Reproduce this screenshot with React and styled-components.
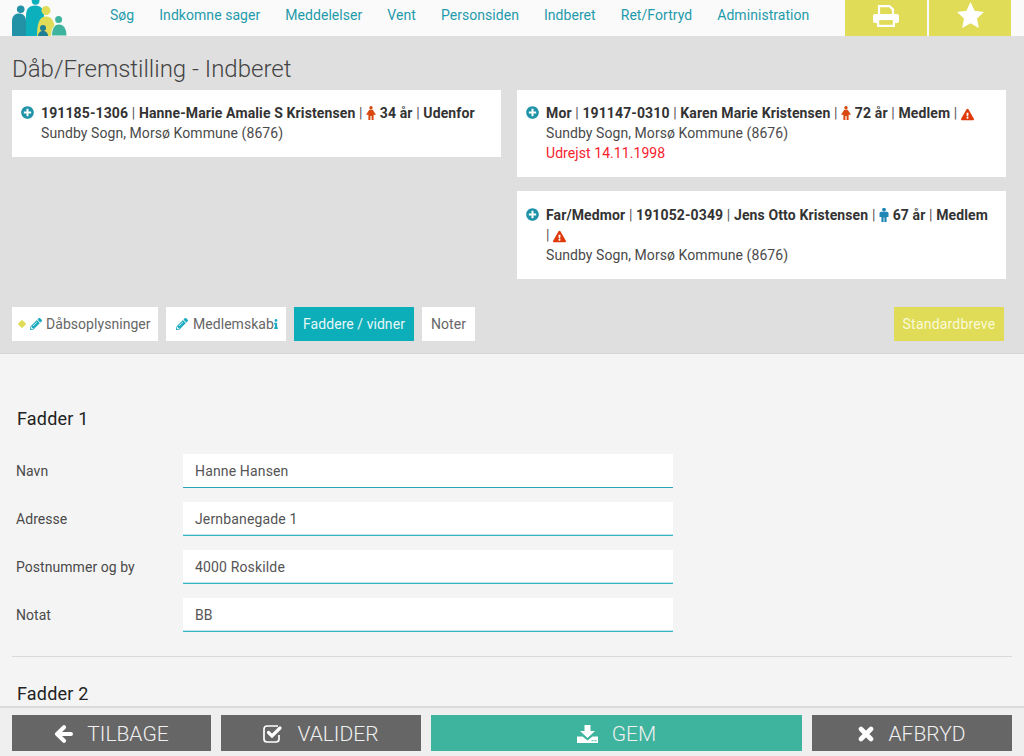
import React from "react";
import styled, { createGlobalStyle } from "styled-components";
import {
  FaPlusCircle,
  FaExclamationTriangle,
  FaPencilAlt,
  FaInfo,
} from "react-icons/fa";

const GlobalStyle = createGlobalStyle`
  html, body {
    margin: 0;
    padding: 0;
    height: 100%;
    overflow: hidden;
  }
  body {
    font-family: Roboto, "Liberation Sans", sans-serif;
    font-size: 14px;
    color: #4a4a4a;
  }
  * {
    box-sizing: border-box;
  }
`;

const Page = styled.div`
  height: 100vh;
  display: flex;
  flex-direction: column;
  background: #f4f4f4;
`;

const Header = styled.header`
  height: 36px;
  flex: none;
  display: flex;
  background: #fafafa;
  padding: 0 13px 0 12px;
`;
const Logo = styled.svg`
  width: 56px;
  height: 36px;
  flex: none;
`;
const Nav = styled.nav`
  flex: 1;
  display: flex;
  gap: 25px;
  padding: 6px 0 0 42px;
`;
const NavLink = styled.a`
  font-size: 14px;
  line-height: 18px;
  letter-spacing: 0.05px;
  color: #1f9bab;
`;
const HeaderActions = styled.div`
  display: flex;
  gap: 2px;
`;
const HeaderAction = styled.div`
  width: 82px;
  display: flex;
  align-items: center;
  justify-content: center;
  padding-bottom: ${(p) => p.$lift}px;
  background: #e0dc58;
`;

const Summary = styled.section`
  height: 318px;
  flex: none;
  padding: 0 12px;
  background: #dfdfdf;
  border-bottom: 1px solid #d6d6d6;
  display: flex;
  flex-direction: column;
`;
const Title = styled.h1`
  margin: 0;
  padding-top: 17px;
  height: 54px;
  font-size: 24px;
  line-height: 32px;
  font-weight: 300;
  color: #444;
`;
const Persons = styled.div`
  display: grid;
  grid-template-columns: 489px 489px;
  column-gap: 16px;
  height: 217px;
`;
const PersonColumn = styled.div`
  display: flex;
  flex-direction: column;
  gap: 14px;
`;
const PersonCard = styled.div`
  background: #fff;
  padding: ${(p) => (p.$low ? 14 : 13)}px 14px 14px 29px;
  position: relative;
  line-height: 20px;
  font-size: 14px;
  letter-spacing: 0.07px;
  color: #4a4a4a;
`;
const PlusIcon = styled(FaPlusCircle)`
  position: absolute;
  left: 9px;
  top: ${(p) => (p.$low ? 17 : 16)}px;
  font-size: 13px;
  color: #1f93a8;
`;
const PersonHead = styled.div`
  font-weight: 700;
  color: #333;
  letter-spacing: 0.12px;
`;
const Sep = styled.span`
  font-weight: 400;
  color: #555;
`;
const GenderIcon = styled.svg`
  width: 10px;
  height: 14px;
  margin: -4px 0;
  vertical-align: 2px;
  fill: ${(p) => (p.$male ? "#1f85b5" : "#d9480f")};
`;
const WarnIcon = styled(FaExclamationTriangle)`
  color: #e03a0c;
  font-size: 13px;
  margin: -4px 0;
  vertical-align: 1px;
`;
const AlertLine = styled.div`
  color: #f5222d;
`;

const Tabs = styled.div`
  display: flex;
  gap: 8px;
`;
const Tab = styled.div`
  height: 34px;
  display: flex;
  align-items: center;
  justify-content: ${(p) => (p.$center ? "center" : "flex-start")};
  padding: 0 8px;
  font-size: 14px;
  letter-spacing: 0.05px;
  white-space: nowrap;
  background: ${(p) => (p.$active ? "#0caeb9" : "#fff")};
  color: ${(p) => (p.$active ? "#e6f7f8" : "#666")};
  width: ${(p) => p.$width}px;
`;
const Pencil = styled(FaPencilAlt)`
  color: #1cabc0;
  font-size: 12px;
  margin: ${(p) => (p.$indent ? "0 5px 0 2px" : "0 4px 0 0")};
  flex: none;
`;
const Diamond = styled.span`
  width: 6px;
  height: 6px;
  margin: 0 5px 0 -1px;
  background: #e0dc58;
  transform: rotate(45deg);
  flex: none;
`;
const InfoMark = styled(FaInfo)`
  color: #1cabc0;
  font-size: 10px;
  margin-left: -3px;
  flex: none;
`;
const LetterButton = styled(Tab)`
  margin-left: auto;
  margin-right: 8px;
  letter-spacing: 0.2px;
  background: #e0dc58;
  color: #fafad8;
`;

const Content = styled.main`
  flex: 1;
  min-height: 0;
  overflow: hidden;
  padding: 0 12px;
`;
const GroupTitle = styled.h2`
  margin: 0;
  padding: 0 0 0 5px;
  font-size: 18px;
  line-height: 24px;
  letter-spacing: 0.2px;
  font-weight: 400;
  color: #222;
`;
const FirstGroup = styled.div`
  padding-top: 53px;
`;
const Rows = styled.div`
  margin-top: 23px;
  display: flex;
  flex-direction: column;
  gap: 14px;
  padding-left: 4px;
`;
const Input = styled.input`
  width: 490px;
  height: 34px;
  border: 0;
  border-bottom: 1px solid #2aa5b5;
  border-radius: 0;
  background: #fff;
  padding: 0 12px;
  font: 400 14px Roboto, "Liberation Sans", sans-serif;
  letter-spacing: 0.15px;
  color: #555;
  outline: none;
`;
const Row = styled.div`
  display: flex;
  align-items: center;
  height: 34px;
  & + & ${Input} {
    border-bottom-color: #35b5c2;
    box-shadow: inset 0 -1px 0 #bfe6ea;
  }
`;
const Label = styled.label`
  width: 167px;
  flex: none;
  font-size: 14px;
  letter-spacing: 0.05px;
  color: #4a4a4a;
`;
const Divider = styled.hr`
  margin: 24px 0 25px;
  border: 0;
  border-top: 1px solid #d9d9d9;
`;

const Footer = styled.footer`
  height: 50px;
  flex: none;
  background: #efefef;
  border-top: 2px solid #dadada;
  padding: 7px 12px 5px;
  display: grid;
  grid-template-columns: 199px 200px 371px 200px;
  column-gap: 10px;
`;
const FooterButton = styled.button`
  border: 0;
  border-radius: 0;
  padding: 1px 0 0;
  display: flex;
  align-items: center;
  justify-content: center;
  gap: 14px;
  background: ${(p) => (p.$primary ? "#3eb39d" : "#666")};
  color: #f0f0f0;
  font: 300 21px Roboto, "Liberation Sans", sans-serif;
`;
const Glyph = styled.svg`
  flex: none;
  width: ${(p) => p.$w}px;
  height: ${(p) => p.$h}px;
`;

function FamilyLogo() {
  return (
    <Logo viewBox="0 0 56 36" aria-hidden="true">
      <circle cx="8.700" cy="9.300" r="3.800" fill="#2391a6" />
      <path d="M0 36V21c0-5 3-7.500 7-7.500s7 2.500 7 7.500v15z" fill="#2391a6" />
      <circle cx="23.600" cy="0.800" r="3.900" fill="#0cb0bd" />
      <path d="M14 36V16c0-7 3-10.500 9-10.500S32 9 32 16v20z" fill="#0cb0bd" />
      <circle cx="34" cy="10.600" r="4.500" fill="#e0dc58" />
      <path d="M25 36c0-12 2-19.500 9-19.500S43.500 24 43.500 36z" fill="#e0dc58" />
      <circle cx="31" cy="28" r="3" fill="#1f7d96" />
      <path d="M26 36c0-3 2-5 5-5s5 2 5 5z" fill="#1f7d96" />
      <circle cx="46.600" cy="19.500" r="3.500" fill="#3eb39d" />
      <path
        d="M39.500 36c0-7 2.500-12 7.500-12s8 5 8 12z"
        fill="#3eb39d"
        stroke="#fafafa"
        strokeWidth="1"
      />
    </Logo>
  );
}

function FemaleIcon() {
  return (
    <GenderIcon viewBox="0 0 10 14">
      <circle cx="5" cy="1.700" r="1.700" />
      <path d="M3.300 3.800h3.400L10 8.800H7.600V14H5.600V10H4.400V14H2.400V8.800H0z" />
    </GenderIcon>
  );
}

function MaleIcon() {
  return (
    <GenderIcon $male viewBox="0 0 10 14">
      <circle cx="5" cy="1.700" r="1.900" />
      <path d="M2 3.800h6a1.500 1.500 0 011.500 1.500V9H7.600v5H5.400V9.500H4.600V14H2.400V9H.5V5.300A1.500 1.500 0 012 3.800z" />
    </GenderIcon>
  );
}

function PrintIcon() {
  return (
    <Glyph $w={26} $h={22} viewBox="0 0 26 22">
      <path d="M6 10V1.100H16.500L20 4.500V10" fill="none" stroke="#fff" strokeWidth="2.200" />
      <path
        d="M2 9h22a2 2 0 012 2v5a2 2 0 01-2 2h-2v-4H4v4H2a2 2 0 01-2-2v-5a2 2 0 012-2z"
        fill="#fff"
      />
      <rect x="5.100" y="14" width="15.800" height="6.900" fill="none" stroke="#fff" strokeWidth="2.200" />
    </Glyph>
  );
}

function StarIcon() {
  return (
    <Glyph $w={27} $h={26} viewBox="0 0 24 23">
      <polygon
        points="12,0 15.600,7.700 24,8.800 17.800,14.600 19.400,23 12,18.900 4.600,23 6.200,14.600 0,8.800 8.400,7.700"
        fill="#fff"
      />
    </Glyph>
  );
}

function BackIcon() {
  return (
    <Glyph $w={19} $h={18} viewBox="0 0 19 18">
      <path
        d="M10 2.200L3 9l7 6.800M4 9h13"
        fill="none"
        stroke="#fff"
        strokeWidth="4"
        strokeLinecap="round"
        strokeLinejoin="round"
      />
    </Glyph>
  );
}

function CheckIcon() {
  return (
    <Glyph $w={20} $h={18} viewBox="0 0 20 18">
      <path
        d="M15 1H4a3 3 0 00-3 3v10a3 3 0 003 3h9a3 3 0 003-3v-4"
        fill="none"
        stroke="#fff"
        strokeWidth="1.700"
      />
      <path
        d="M5.500 7.500l3.500 3.500 8-8"
        fill="none"
        stroke="#fff"
        strokeWidth="3.200"
        strokeLinecap="round"
      />
    </Glyph>
  );
}

function SaveIcon() {
  return (
    <Glyph $w={21} $h={18} viewBox="0 0 21 18">
      <polygon points="7.500,0 13.500,0 13.500,6 18,6 10.500,13 3,6 7.500,6" fill="#fff" />
      <path d="M0 11.500h5.500l5 4 5-4H21V18H0z" fill="#fff" />
      <rect x="14.500" y="15.200" width="2" height="1" fill="#3eb39d" />
      <rect x="17.500" y="15.200" width="2" height="1" fill="#3eb39d" />
    </Glyph>
  );
}

function CancelIcon() {
  return (
    <Glyph $w={16} $h={16} viewBox="0 0 16 16">
      <path
        d="M3 3l10 10M13 3L3 13"
        fill="none"
        stroke="#fff"
        strokeWidth="4.600"
        strokeLinecap="round"
      />
    </Glyph>
  );
}

function Person({ children, place, alert, low }) {
  return (
    <PersonCard $low={low}>
      <PlusIcon $low={low} />
      <PersonHead>{children}</PersonHead>
      <div>{place}</div>
      {alert && <AlertLine>{alert}</AlertLine>}
    </PersonCard>
  );
}

const navItems = [
  "Søg",
  "Indkomne sager",
  "Meddelelser",
  "Vent",
  "Personsiden",
  "Indberet",
  "Ret/Fortryd",
  "Administration",
];
const fields = [
  ["Navn", "Hanne Hansen"],
  ["Adresse", "Jernbanegade 1"],
  ["Postnummer og by", "4000 Roskilde"],
  ["Notat", "BB"],
];
const place = "Sundby Sogn, Morsø Kommune (8676)";

export default function App() {
  return (
    <Page>
      <GlobalStyle />
      <Header>
        <FamilyLogo />
        <Nav>
          {navItems.map((item) => (
            <NavLink key={item}>{item}</NavLink>
          ))}
        </Nav>
        <HeaderActions>
          <HeaderAction $lift={4}>
            <PrintIcon />
          </HeaderAction>
          <HeaderAction $lift={6}>
            <StarIcon />
          </HeaderAction>
        </HeaderActions>
      </Header>

      <Summary>
        <Title>Dåb/Fremstilling - Indberet</Title>
        <Persons>
          <PersonColumn>
            <Person place={place}>
              191185-1306 <Sep>|</Sep> Hanne-Marie Amalie S Kristensen <Sep>|</Sep> <FemaleIcon /> 34 år{" "}
              <Sep>|</Sep> Udenfor
            </Person>
          </PersonColumn>
          <PersonColumn>
            <Person place={place} alert="Udrejst 14.11.1998">
              Mor <Sep>|</Sep> 191147-0310 <Sep>|</Sep> Karen Marie Kristensen <Sep>|</Sep> <FemaleIcon /> 72 år{" "}
              <Sep>|</Sep> Medlem <Sep>|</Sep> <WarnIcon />
            </Person>
            <Person place={place} low>
              Far/Medmor <Sep>|</Sep> 191052-0349 <Sep>|</Sep> Jens Otto Kristensen <Sep>|</Sep> <MaleIcon /> 67 år{" "}
              <Sep>|</Sep> Medlem <Sep>|</Sep> <WarnIcon />
            </Person>
          </PersonColumn>
        </Persons>
        <Tabs>
          <Tab $width={146}>
            <Diamond />
            <Pencil />
            Dåbsoplysninger
          </Tab>
          <Tab $width={120}>
            <Pencil $indent />
            Medlemskab
            <InfoMark />
          </Tab>
          <Tab $active $center $width={120}>
            Faddere / vidner
          </Tab>
          <Tab $center $width={53}>
            Noter
          </Tab>
          <LetterButton $center $width={110}>
            Standardbreve
          </LetterButton>
        </Tabs>
      </Summary>

      <Content>
        <FirstGroup>
          <GroupTitle>Fadder 1</GroupTitle>
          <Rows>
            {fields.map(([label, value]) => (
              <Row key={label}>
                <Label>{label}</Label>
                <Input defaultValue={value} />
              </Row>
            ))}
          </Rows>
        </FirstGroup>
        <Divider />
        <GroupTitle>Fadder 2</GroupTitle>
      </Content>

      <Footer>
        <FooterButton>
          <BackIcon />
          TILBAGE
        </FooterButton>
        <FooterButton>
          <CheckIcon />
          VALIDER
        </FooterButton>
        <FooterButton $primary>
          <SaveIcon />
          GEM
        </FooterButton>
        <FooterButton>
          <CancelIcon />
          AFBRYD
        </FooterButton>
      </Footer>
    </Page>
  );
}
